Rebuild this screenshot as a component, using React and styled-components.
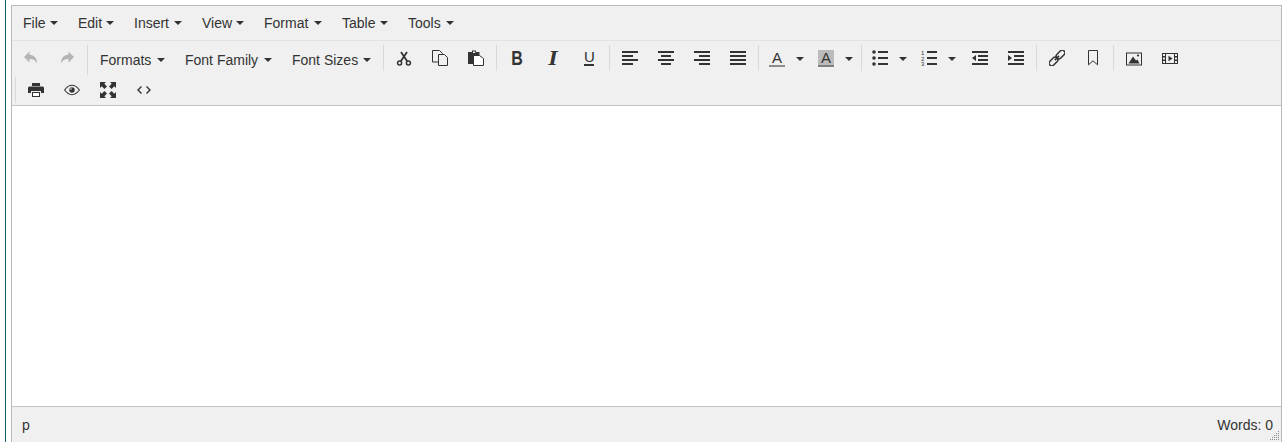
import React from "react"
import styled, { createGlobalStyle } from "styled-components"

const GlobalStyle = createGlobalStyle`
  html, body {
    margin: 0;
    height: 100%;
    background: #fff;
    overflow: hidden;
  }
  #root {
    height: 100%;
  }
`

const Page = styled.div`
  box-sizing: border-box;
  height: 100%;
  margin-left: 5px;
  padding: 5px 5px 0 5px;
  border-left: 1px solid #0f5f66;
  font-family: "Liberation Sans", Arial, sans-serif;
  font-size: 14px;
  color: #333;
`

const Editor = styled.div`
  box-sizing: border-box;
  display: flex;
  flex-direction: column;
  width: 1271px;
  height: 100%;
  border: 1px solid #b9b9b9;
  border-bottom: none;
  background: #f0f0f0;
`

const MenuBar = styled.div`
  display: flex;
  box-sizing: border-box;
  height: 35px;
  padding: 0 1px;
  border-bottom: 1px solid #e2e2e2;
`

const DropButton = styled.button`
  box-sizing: border-box;
  display: flex;
  align-items: center;
  justify-content: space-between;
  width: ${p => p.$width}px;
  height: ${p => p.$height || 34}px;
  padding: 0 10px;
  border: none;
  background: transparent;
  font: inherit;
  color: inherit;
  white-space: nowrap;
`

const Caret = styled.span`
  display: block;
  flex: none;
  width: 0;
  height: 0;
  border-top: 4px solid #333;
  border-left: 4px solid transparent;
  border-right: 4px solid transparent;
`

const Toolbar = styled.div`
  display: flex;
  flex-direction: column;
  gap: 2px;
  box-sizing: border-box;
  height: 65px;
  padding-top: 4px;
  border-bottom: 1px solid #c5c5c5;
`

const ToolRow = styled.div`
  display: flex;
  align-items: flex-start;
  height: ${p => p.$height}px;
  padding-left: ${p => p.$inset}px;
`

const Group = styled.div`
  display: flex;
  align-items: flex-start;
  padding: 0 2px 0 ${p => (p.$first ? 0 : 2)}px;
  border-left: ${p => (p.$first ? "none" : "1px solid #d9d9d9")};
`

const IconButton = styled.button`
  display: flex;
  align-items: center;
  justify-content: center;
  width: 36px;
  height: 26px;
  padding: 0;
  border: none;
  background: transparent;
  color: ${p => (p.$disabled ? "#b4b4b4" : "#333")};
`

const SplitButton = styled.button`
  display: flex;
  align-items: center;
  width: 49px;
  height: 26px;
  padding: 0 6px 0 8px;
  border: none;
  background: transparent;
  color: #333;
  ${Caret} {
    margin-left: 11px;
    margin-top: 2px;
  }
`

const Svg = styled.svg`
  display: block;
  width: 16px;
  height: 16px;
`

const Letter = styled.span`
  display: block;
  width: 16px;
  height: 16px;
  line-height: 16px;
  text-align: center;
  font-family: "Liberation Sans", Arial, sans-serif;
`

const BoldLetter = styled(Letter)`
  font-weight: 700;
  font-size: 20px;
  transform: scaleX(0.8);
`

const ItalicLetter = styled(Letter)`
  font-family: "Liberation Serif", serif;
  font-weight: 700;
  font-style: italic;
  font-size: 21px;
  transform: scaleX(1.15);
`

const UnderLetter = styled(Letter)`
  box-sizing: border-box;
  width: 10px;
  height: 16px;
  line-height: 14px;
  font-size: 15px;
  border-bottom: 2px solid #333;
`

const ColorLetter = styled(Letter)`
  box-sizing: border-box;
  height: 17px;
  line-height: 15px;
  font-size: 15px;
  background: ${p => p.$back || "transparent"};
  border-bottom: 2px solid ${p => p.$bar};
`

const EditArea = styled.div`
  flex: none;
  height: 300px;
  background: #fff;
`

const StatusBar = styled.div`
  position: relative;
  flex: 1;
  display: flex;
  justify-content: space-between;
  align-items: center;
  padding: 0 8px 0 10px;
  border-top: 1px solid #c5c5c5;
`

const Grip = styled.svg`
  position: absolute;
  right: 2px;
  bottom: 2px;
  width: 9px;
  height: 9px;
`

// 16x16 drawings, same grid as the editor's icon font
const ICONS = {
  undo: <path fill="currentColor" d="M6.5 1.5 1 7l5.5 5.500V9c3.500-.2 5.800 1 7.500 4.500C14 8.500 11.500 5 6.500 4.800z" />,
  redo: <path fill="currentColor" d="M9.500 1.500 15 7l-5.500 5.500V9C6 8.800 3.700 10 2 13.500 2 8.500 4.500 5 9.500 4.800z" />,
  cut: (
    <g fill="none" stroke="currentColor" strokeWidth="1.500">
      <circle cx="3.600" cy="13" r="2" />
      <circle cx="12.400" cy="13" r="2" />
      <path strokeWidth="1.800" d="M4.800 11.300 11 2M11.200 11.300 5 2" />
    </g>
  ),
  copy: (
    <g fill="#f0f0f0" stroke="currentColor">
      <path d="M.5.500h7l3 3v8.500H.5z" />
      <path d="M6.500 4.500h6l3 3v8h-9z" />
    </g>
  ),
  paste: (
    <g>
      <path fill="currentColor" d="M0 2h4V.5h4V2h3.500v12H0z" />
      <path fill="#f0f0f0" d="M5 1.500h2.200V3H5z" />
      <path fill="#fff" stroke="currentColor" d="M5.500 5.500h6l4 3v7h-10z" />
    </g>
  ),
  alignleft: <path fill="currentColor" d="M0 1h16v2H0zM0 5h11v2H0zM0 9h16v2H0zM0 13h11v2H0z" />,
  aligncenter: <path fill="currentColor" d="M0 1h16v2H0zM3 5h10v2H3zM0 9h16v2H0zM3 13h10v2H3z" />,
  alignright: <path fill="currentColor" d="M0 1h16v2H0zM5 5h11v2H5zM0 9h16v2H0zM5 13h11v2H5z" />,
  alignjustify: <path fill="currentColor" d="M0 1h16v2H0zM0 5h16v2H0zM0 9h16v2H0zM0 13h16v2H0z" />,
  bullist: (
    <g fill="currentColor">
      <circle cx="2" cy="2" r="1.800" />
      <circle cx="2" cy="8" r="1.800" />
      <circle cx="2" cy="14" r="1.800" />
      <path d="M6 1h10v2H6zM6 7h10v2H6zM6 13h10v2H6z" />
    </g>
  ),
  numlist: (
    <g fill="currentColor">
      <text x="0" y="5" fontSize="6" fontFamily="Liberation Sans, sans-serif">1</text>
      <text x="0" y="10.500" fontSize="6" fontFamily="Liberation Sans, sans-serif">2</text>
      <text x="0" y="16" fontSize="6" fontFamily="Liberation Sans, sans-serif">3</text>
      <path d="M6 1h10v2H6zM6 7h10v2H6zM6 13h10v2H6z" />
    </g>
  ),
  outdent: <path fill="currentColor" d="M0 1h16v2H0zM6 5h10v2H6zM6 9h10v2H6zM0 13h16v2H0zM4 5v6L0 8z" />,
  indent: <path fill="currentColor" d="M0 1h16v2H0zM6 5h10v2H6zM6 9h10v2H6zM0 13h16v2H0zM0 5v6l4-3z" />,
  link: (
    <g fill="none" stroke="currentColor" strokeWidth="1.500" transform="rotate(-45 8 8)">
      <rect x="-2" y="5.300" width="10" height="5.400" rx="2.700" />
      <rect x="8" y="5.300" width="10" height="5.400" rx="2.700" />
      <path d="M5 8h6" />
    </g>
  ),
  bookmark: <path fill="none" stroke="currentColor" d="M3.500.5h9v14.300L8 10.800l-4.500 4z" />,
  image: (
    <g fill="currentColor">
      <path fillRule="evenodd" d="M0 2.500h16v13H0zM1 3.500v11h14v-11z" />
      <path d="M2.500 13.500 7 6.500l3 4 1.500-1 2 4z" />
      <circle cx="12" cy="5.500" r="1.100" />
    </g>
  ),
  media: (
    <g fill="currentColor">
      <path fillRule="evenodd" d="M0 3h16v11H0zM1 4v2h2V4zM13 4v2h2V4zM4 4v9h8V4zM1 7.500v2h2v-2zM13 7.500v2h2v-2zM1 11v2h2v-2zM13 11v2h2v-2z" />
      <path d="M6.500 5.800v5.400L10.500 8.500z" />
    </g>
  ),
  print: (
    <g fill="currentColor">
      <path d="M4 1h8v3H4z" />
      <path d="M1.500 4.500h13a1.500 1.500 0 0 1 1.500 1.500v5h-3V9H3v2H0V6a1.500 1.500 0 0 1 1.500-1.500z" />
      <path d="M4 10h8v5H4z" />
      <path fill="#fff" d="M5 11h6v3H5z" />
    </g>
  ),
  preview: (
    <g>
      <path fill="none" stroke="currentColor" strokeWidth="1.100" d="M.6 8C3 4.800 5.500 3.300 8 3.300s5 1.500 7.400 4.700C13 11.200 10.500 12.700 8 12.700S3 11.200.6 8z" />
      <circle fill="currentColor" cx="8" cy="8" r="2.700" />
      <circle fill="#f0f0f0" cx="7" cy="7" r=".8" />
    </g>
  ),
  fullscreen: (
    <path
      fill="currentColor"
      d="M0 0h6L4.300 1.700 7 4.400 4.400 7 1.700 4.300 0 6zM16 0v6l-1.700-1.700L11.600 7 9 4.400l2.700-2.700L10 0zM0 16v-6l1.700 1.700L4.400 9 7 11.600l-2.700 2.700L6 16zM16 16h-6l1.700-1.700L9 11.600 11.600 9l2.700 2.700L16 10z"
    />
  ),
  code: <path fill="none" stroke="currentColor" strokeWidth="1.400" d="M5.500 4.500 2 8l3.500 3.500M10.500 4.500 14 8l-3.500 3.500" />,
}

const MENUS = [
  { label: "File", width: 55 },
  { label: "Edit", width: 56 },
  { label: "Insert", width: 68 },
  { label: "View", width: 62 },
  { label: "Format", width: 78 },
  { label: "Table", width: 66 },
  { label: "Tools", width: 66 },
]
const LISTS = [
  { label: "Formats", width: 85 },
  { label: "Font Family", width: 107 },
  { label: "Font Sizes", width: 99 },
]

function Icon({ name, disabled }) {
  return (
    <IconButton $disabled={disabled}>
      <Svg viewBox="0 0 16 16">{ICONS[name]}</Svg>
    </IconButton>
  )
}

function Split({ children }) {
  return (
    <SplitButton>
      {children}
      <Caret />
    </SplitButton>
  )
}

export default function App() {
  return (
    <>
      <GlobalStyle />
      <Page>
        <Editor>
          <MenuBar>
            {MENUS.map(m => (
              <DropButton key={m.label} $width={m.width}>
                {m.label}
                <Caret />
              </DropButton>
            ))}
          </MenuBar>
          <Toolbar>
            <ToolRow $inset={1} $height={30}>
              <Group $first>
                <Icon name="undo" disabled />
                <Icon name="redo" disabled />
              </Group>
              <Group>
                {LISTS.map(l => (
                  <DropButton key={l.label} $width={l.width} $height={30}>
                    {l.label}
                    <Caret />
                  </DropButton>
                ))}
              </Group>
              <Group>
                <Icon name="cut" />
                <Icon name="copy" />
                <Icon name="paste" />
              </Group>
              <Group>
                <IconButton><BoldLetter>B</BoldLetter></IconButton>
                <IconButton><ItalicLetter>I</ItalicLetter></IconButton>
                <IconButton><UnderLetter>U</UnderLetter></IconButton>
              </Group>
              <Group>
                <Icon name="alignleft" />
                <Icon name="aligncenter" />
                <Icon name="alignright" />
                <Icon name="alignjustify" />
              </Group>
              <Group>
                <Split><ColorLetter $bar="#8c8c8c">A</ColorLetter></Split>
                <Split><ColorLetter $bar="#808080" $back="#bbb">A</ColorLetter></Split>
              </Group>
              <Group>
                <Split><Svg viewBox="0 0 16 16">{ICONS.bullist}</Svg></Split>
                <Split><Svg viewBox="0 0 16 16">{ICONS.numlist}</Svg></Split>
                <Icon name="outdent" />
                <Icon name="indent" />
              </Group>
              <Group>
                <Icon name="link" />
                <Icon name="bookmark" />
              </Group>
              <Group>
                <Icon name="image" />
                <Icon name="media" />
              </Group>
            </ToolRow>
            <ToolRow $inset={3} $height={26}>
              <Group>
                <Icon name="print" />
                <Icon name="preview" />
                <Icon name="fullscreen" />
                <Icon name="code" />
              </Group>
            </ToolRow>
          </Toolbar>
          <EditArea />
          <StatusBar>
            <span>p</span>
            <span>Words: 0</span>
            <Grip viewBox="0 0 9 9">
              <path
                fill="#8a8a8a"
                d="M8 0h1v1H8zM6 2h1v1H6zM8 2h1v1H8zM4 4h1v1H4zM6 4h1v1H6zM8 4h1v1H8zM2 6h1v1H2zM4 6h1v1H4zM6 6h1v1H6zM8 6h1v1H8zM0 8h1v1H0zM2 8h1v1H2zM4 8h1v1H4zM6 8h1v1H6zM8 8h1v1H8z"
              />
            </Grip>
          </StatusBar>
        </Editor>
      </Page>
    </>
  )
}
